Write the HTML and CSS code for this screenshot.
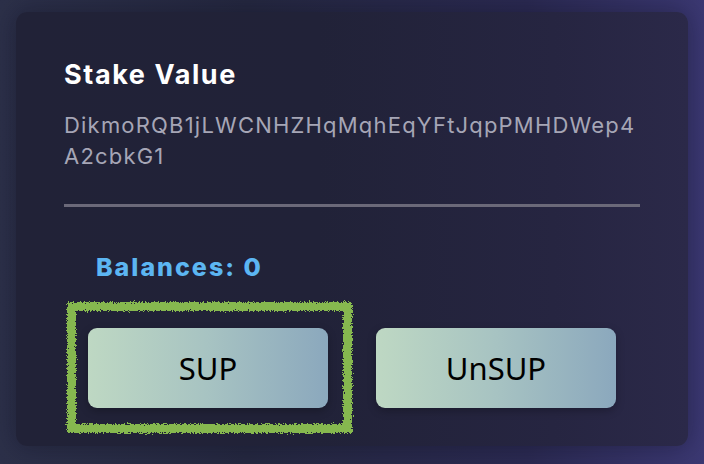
FILE: index.html
```html
<!DOCTYPE html>
<html lang="en">
<head>
<meta charset="utf-8">
<title>Stake Value</title>
<link rel="stylesheet" href="styles.css">
</head>
<body>
<svg class="defs" width="0" height="0" aria-hidden="true">
  <filter id="rough" x="-10%" y="-10%" width="120%" height="120%">
    <feTurbulence type="fractalNoise" baseFrequency="0.8" numOctaves="2" seed="3" result="noise"/>
    <feDisplacementMap in="SourceGraphic" in2="noise" scale="6" xChannelSelector="R" yChannelSelector="G"/>
  </filter>
</svg>
<main class="card">
  <h1 class="title">Stake Value</h1>
  <p class="address"><span class="line">DikmoRQB1jLWCNHZHqMqhEqYFtJqpPMHDWep4</span><span class="line">A2cbkG1</span></p>
  <hr class="divider">
  <div class="balances">Balances: 0</div>
  <div class="actions">
    <div class="highlighted">
      <button class="btn">SUP</button>
      <span class="scribble"></span>
    </div>
    <button class="btn">UnSUP</button>
  </div>
</main>
</body>
</html>
```
FILE: styles.css
```css
html, body {
  margin: 0;
  padding: 0;
}
body {
  width: 704px;
  height: 464px;
  overflow: hidden;
  background: linear-gradient(90deg, #2c3049 0%, #252840 35%, #2b2a52 75%, #3b3872 100%);
  font-family: Inter, "Noto Sans", sans-serif;
  padding: 12px 16px 0;
  box-sizing: border-box;
}
.defs {
  position: absolute;
  width: 0;
  height: 0;
}
.card {
  height: 434px;
  box-sizing: border-box;
  border-radius: 11px;
  background: linear-gradient(90deg, #212237 0%, #212238 45%, #262541 80%, #2b2949 100%);
  box-shadow: 0 0 24px rgba(10, 10, 25, 0.35);
  padding: 47px 48px 0;
}
.title {
  margin: 0;
  font-size: 27px;
  line-height: 32px;
  font-weight: 700;
  color: #ffffff;
  letter-spacing: 1.6px;
}
.address {
  margin: 19px 0 0;
  font-size: 22px;
  line-height: 31px;
  color: #a6a6b6;
  letter-spacing: 1.2px;
  white-space: nowrap;
}
.line {
  display: block;
}
.divider {
  margin: 32px 0 0;
  border: 0;
  height: 3px;
  width: 576px;
  background: #6b6979;
}
.balances {
  margin: 44px 0 0 32px;
  font-size: 25px;
  line-height: 32px;
  font-weight: 800;
  color: #5cb6f2;
  letter-spacing: 2px;
}
.actions {
  margin: 45px 0 0 24px;
  display: flex;
  gap: 48px;
}
.highlighted {
  position: relative;
  display: flex;
}
.btn {
  width: 240px;
  height: 80px;
  border: 0;
  border-radius: 9px;
  background: linear-gradient(90deg, #bed8c3 0%, #a7c3c2 50%, #8ba8bd 100%);
  box-shadow: 0 3px 8px rgba(0, 0, 0, 0.25);
  font-family: "Noto Sans", sans-serif;
  font-size: 31px;
  color: #000000;
  padding: 0;
  cursor: pointer;
}
.scribble {
  position: absolute;
  left: -21px;
  top: -26px;
  right: -24px;
  bottom: -25px;
  border: 9px solid #86b84f;
  filter: url(#rough);
  pointer-events: none;
}
```
